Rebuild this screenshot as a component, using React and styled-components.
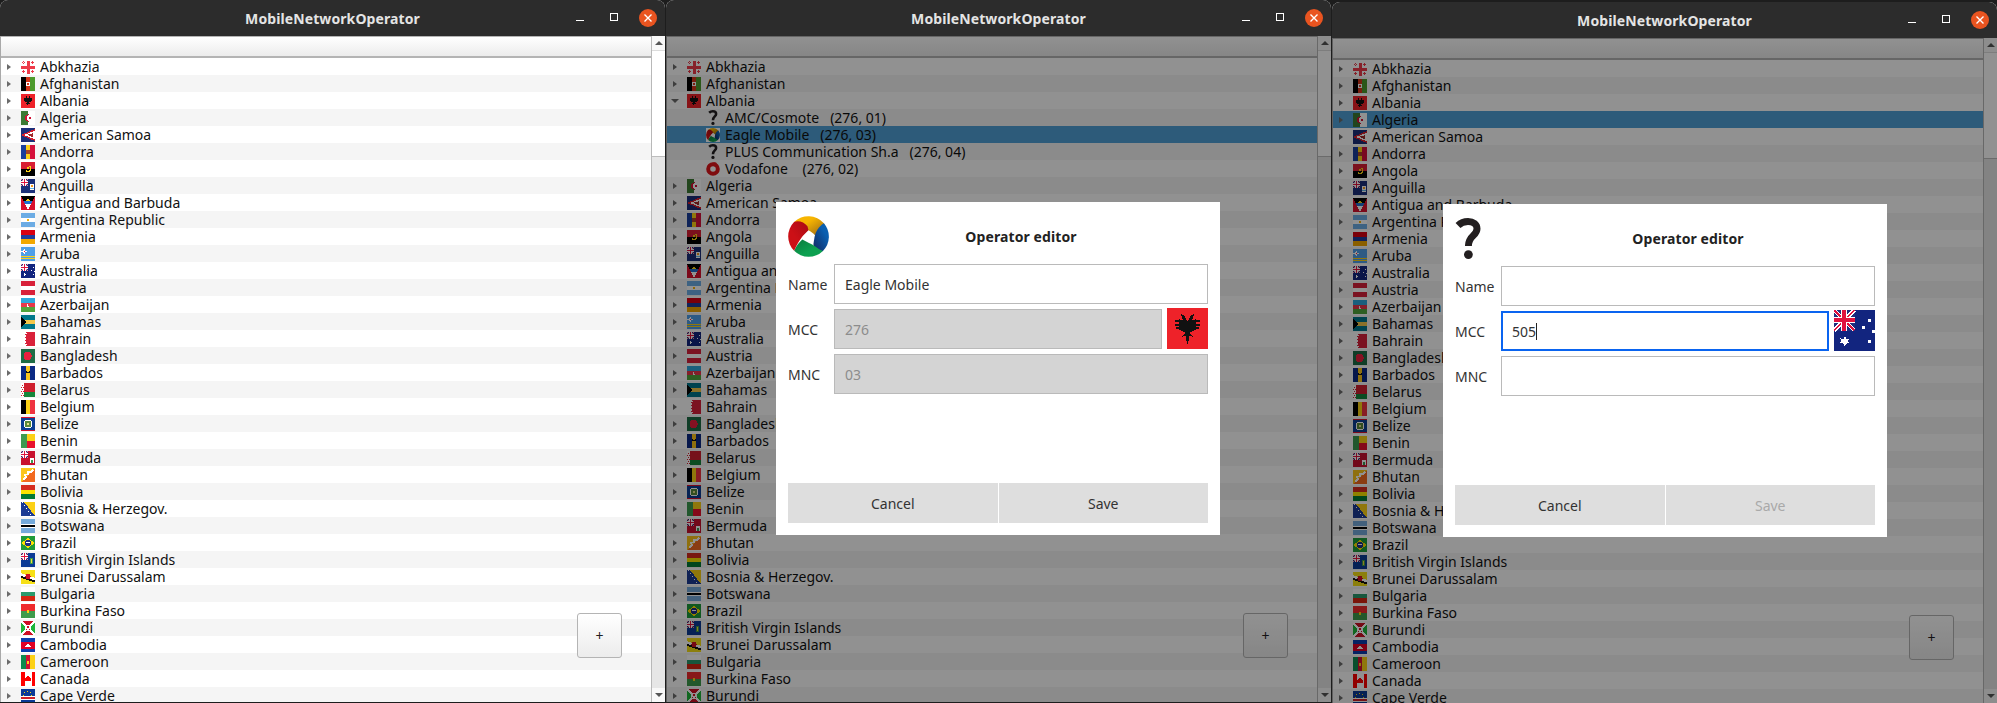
import React from 'react';
import styled, { createGlobalStyle } from 'styled-components';

const UI_FONT = '"Noto Sans", "Open Sans", sans-serif';

const GlobalStyle = createGlobalStyle`
  html, body { margin: 0; padding: 0; background: #1d1d1d; }
  body { width: 1997px; height: 703px; overflow: hidden; font-family: ${UI_FONT}; }
`;

/* ---------- flags ---------- */

const H = (...c) => c.map((col, i) => <rect key={i} x="0" y={(i * 14) / c.length} width="14" height={14 / c.length} fill={col} />);
const V = (...c) => c.map((col, i) => <rect key={i} y="0" x={(i * 14) / c.length} width={14 / c.length} height="14" fill={col} />);
const Dots = ({ fill = '#fff', pts, s = 1 }) => pts.map(([x, y], i) => <rect key={i} x={x} y={y} width={s} height={s} fill={fill} />);

const UK = () => (
  <g>
    <rect width="7" height="7" fill="#1f2f7e" />
    <path d="M0 0L7 7M7 0L0 7" stroke="#fff" strokeWidth="1.4" />
    <path d="M0 0L7 7M7 0L0 7" stroke="#e0123f" strokeWidth=".5" />
    <path d="M3.5 0V7M0 3.5H7" stroke="#fff" strokeWidth="2.2" />
    <path d="M3.5 0V7M0 3.5H7" stroke="#e0123f" strokeWidth="1.2" />
  </g>
);

const Eagle = () => (
  <g fill="#111">
    <path d="M4.9 2.1L6 2.7 6.6 4 7 4.5 7.4 4 8 2.7 9.1 2.1 9 3.2 8.5 3.9 8.7 4 10 3.9 10 7.4 8.6 7.9 7.7 8.6 8.9 9.8 7.7 9.5 7.4 11 7 12.2 6.6 11 6.3 9.5 5.1 9.8 6.3 8.6 5.4 7.9 4 7.4 4 3.9 5.3 4 5.5 3.9 5 3.2Z" />
    <path d="M2.7 4.2H4.4V4.9H2.7zM2.7 5.3H4.4V6H2.7zM3 6.4H4.4V7.1H3zM9.6 4.2H11.3V4.9H9.6zM9.6 5.3H11.3V6H9.6zM9.6 6.4H11V7.1H9.6z" />
  </g>
);

const FLAGS = {
  Abkhazia: (
    <g>
      <rect y="0.5" width="14" height="13" fill="#fff" />
      <path d="M5.5 0.5H8.5V5.5H14V8.5H8.5V13.5H5.5V8.5H0V5.5H5.5Z" fill="#ee3b4a" />
      <Dots fill="#ee3b4a" pts={[[1, 2], [3, 2], [2, 1], [2, 3], [11, 2], [10, 2], [12, 2], [11, 1], [11, 3], [2, 11], [1, 11], [3, 11], [2, 10], [2, 12], [11, 11], [10, 11], [12, 11], [11, 10], [11, 12]]} />
    </g>
  ),
  Afghanistan: (
    <g>
      {V('#000', '#d3361c', '#4d9a2c')}
      <rect x="5" y="5" width="4" height="4" fill="#fff" />
      <rect x="6" y="6" width="2" height="2" fill="#d3361c" />
    </g>
  ),
  Albania: (
    <g>
      <rect width="14" height="14" fill="#ee2229" />
      <Eagle />
    </g>
  ),
  Algeria: (
    <g>
      {V('#3c7a33', '#fff')}
      <circle cx="7.5" cy="7" r="3.6" fill="#d21034" />
      <circle cx="8.6" cy="7" r="3" fill="#fff" />
      <rect x="8" y="6" width="2" height="2" fill="#d21034" />
    </g>
  ),
  'American Samoa': (
    <g>
      <rect width="14" height="14" fill="#1b2f7a" />
      <path d="M14 1L0 7 14 13Z" fill="#d61e2c" />
      <path d="M14 2.6L3 7 14 11.4Z" fill="#fff" />
      <path d="M12.5 5L7 6.6 9 8.4 12 9Z" fill="#a02a2a" />
    </g>
  ),
  Andorra: (
    <g>
      {V('#1a3f9c', '#fcd116', '#d5103b')}
      <rect x="5.4" y="5" width="3.2" height="4" fill="#a8452a" />
    </g>
  ),
  Angola: (
    <g>
      {H('#d81e34', '#000')}
      <path d="M5 8.6C7 10.4 10 9 9.8 6.4 9.6 4.8 8.6 4.2 7.8 4" fill="none" stroke="#fcd116" strokeWidth="1" />
      <rect x="6" y="5" width="2" height="2" fill="#fcd116" />
    </g>
  ),
  Anguilla: (
    <g>
      <rect width="14" height="14" fill="#1b2f7a" />
      <UK />
      <rect x="9" y="5" width="4" height="6" fill="#fff" />
      <rect x="10" y="6" width="2" height="2" fill="#f59a1c" />
      <rect x="9" y="9" width="4" height="1" fill="#63b5e5" />
    </g>
  ),
  'Antigua and Barbuda': (
    <g>
      <rect width="14" height="14" fill="#d8102f" />
      <path d="M0 0H14L7 14Z" fill="#000" />
      <path d="M2.5 5H11.5L10 8H4Z" fill="#1f6fd0" />
      <path d="M4 8H10L7 14Z" fill="#fff" />
      <path d="M4.5 5L7 2 9.5 5Z" fill="#fcd116" />
    </g>
  ),
  'Argentina Republic': (
    <g>
      {H('#6cace4', '#fff', '#6cace4')}
      <rect x="6" y="6" width="2" height="2" fill="#f6b40e" />
    </g>
  ),
  Armenia: H('#d90012', '#1e3f9e', '#f2a800'),
  Aruba: (
    <g>
      <rect width="14" height="14" fill="#4f9fe8" />
      <rect y="9" width="14" height="1" fill="#fcd116" />
      <rect y="11" width="14" height="1" fill="#fcd116" />
      <path d="M3 1.5L4 3.5 6 4.5 4 5.5 3 7.5 2 5.5 0 4.5 2 3.5Z" fill="#fff" />
      <rect x="2.5" y="4" width="1" height="1" fill="#e0123f" />
    </g>
  ),
  Australia: (
    <g>
      <rect width="14" height="14" fill="#12257f" />
      <UK />
      <path d="M3.7 8.9L4.2 9.9 5.3 9.7 4.8 10.6 5.5 11.4 4.4 11.3 3.7 12.3 3 11.3 1.9 11.4 2.6 10.6 2.1 9.7 3.2 9.9Z" fill="#fff" />
      <Dots pts={[[11.6, 3.1], [9.7, 5.6], [13, 6.8], [11.5, 10.4]]} />
    </g>
  ),
  Austria: (
    <g>
      {H('#d8213a', '#fff', '#d8213a')}
    </g>
  ),
  Azerbaijan: (
    <g>
      {H('#2fa8dc', '#e8384a', '#52a53c')}
      <rect x="6" y="5.5" width="2.4" height="3" fill="#fff" />
      <rect x="7" y="5.5" width="1.4" height="2" fill="#e8384a" />
    </g>
  ),
  Bahamas: (
    <g>
      {H('#00778b', '#f3c74a', '#00778b')}
      <path d="M0 2L6 7 0 12Z" fill="#000" />
    </g>
  ),
  Bahrain: (
    <g>
      <rect width="14" height="14" fill="#fff" />
      <path d="M14 0H4L6 1.4 3.6 2.8 6 4.2 3.6 5.6 6 7 3.6 8.4 6 9.8 3.6 11.2 6 12.6 4 14H14Z" fill="#d9213a" />
    </g>
  ),
  Bangladesh: (
    <g>
      <rect width="14" height="14" fill="#1d6b45" />
      <circle cx="6.6" cy="7" r="4" fill="#ea1f3d" />
    </g>
  ),
  Barbados: (
    <g>
      {V('#0b2a84', '#fbc61c', '#0b2a84')}
      <path d="M5.4 5V7.2H6.6V10H7.4V7.2H8.6V5H8V6.4H7.4V5H6.6V6.4H6V5Z" fill="#111" />
    </g>
  ),
  Belarus: (
    <g>
      <rect width="14" height="14" fill="#fff" />
      <rect x="3" width="11" height="9" fill="#cf1f2e" />
      <rect x="3" y="9" width="11" height="5" fill="#16873c" />
      <Dots fill="#cf1f2e" s={1} pts={[[1, 2], [0, 4], [2, 4], [1, 6], [0, 8], [2, 8], [1, 10], [0, 12], [2, 12]]} />
    </g>
  ),
  Belgium: V('#000', '#fcd116', '#ef3340'),
  Belize: (
    <g>
      <rect width="14" height="14" fill="#0b3f94" />
      <rect y="0" width="14" height="1" fill="#d8102f" />
      <rect y="13" width="14" height="1" fill="#d8102f" />
      <circle cx="7" cy="7" r="4.4" fill="#fff" />
      <circle cx="7" cy="7" r="3.4" fill="#5a8a3a" />
      <rect x="5.6" y="5.6" width="2.8" height="2.8" fill="#e7e08a" />
    </g>
  ),
  Benin: (
    <g>
      <rect width="6" height="14" fill="#3d9a50" />
      <rect x="6" width="8" height="7" fill="#fcd116" />
      <rect x="6" y="7" width="8" height="7" fill="#e8112d" />
    </g>
  ),
  Bermuda: (
    <g>
      <rect width="14" height="14" fill="#c8102e" />
      <UK />
      <rect x="9" y="7" width="4" height="5" fill="#fff" />
      <rect x="10" y="9" width="2" height="3" fill="#3d9a50" />
    </g>
  ),
  Bhutan: (
    <g>
      <path d="M0 0H14L0 14Z" fill="#fbc61c" />
      <path d="M14 0V14H0Z" fill="#f26a21" />
      <path d="M2 12L5 9 4 7 7 6 7 4 10 4 12 2" fill="none" stroke="#fff" strokeWidth="1.6" />
    </g>
  ),
  Bolivia: H('#d52b1e', '#f9e300', '#007934'),
  'Bosnia & Herzegov.': (
    <g>
      <rect width="14" height="14" fill="#1b3a94" />
      <path d="M3 0H14V14Z" fill="#fcd116" />
      <Dots pts={[[1, 0], [3, 3], [5, 6], [7, 9], [9, 12]]} />
    </g>
  ),
  Botswana: (
    <g>
      <rect width="14" height="14" fill="#75aadb" />
      <rect y="5" width="14" height="4" fill="#fff" />
      <rect y="6" width="14" height="2" fill="#000" />
    </g>
  ),
  Brazil: (
    <g>
      <rect width="14" height="14" fill="#1f9b3a" />
      <path d="M7 1.6L13.4 7 7 12.4 .6 7Z" fill="#fedf00" />
      <circle cx="7" cy="7" r="3" fill="#1d2f86" />
      <rect x="4.6" y="6.4" width="4.8" height="1" fill="#fff" />
    </g>
  ),
  'British Virgin Islands': (
    <g>
      <rect width="14" height="14" fill="#0b3a96" />
      <UK />
      <rect x="9" y="5" width="3.4" height="6" fill="#3e9a4a" />
      <rect x="10" y="6" width="1.4" height="4" fill="#f5dc3c" />
    </g>
  ),
  'Brunei Darussalam': (
    <g>
      <rect width="14" height="14" fill="#f7e017" />
      <path d="M0 3L14 8V12L0 7Z" fill="#fff" />
      <path d="M0 6L14 10.6V12.6L0 8Z" fill="#111" />
      <rect x="5" y="3.5" width="4" height="5.5" fill="#cf1126" />
      <rect x="3.6" y="6" width="6.8" height="1.4" fill="#cf1126" />
    </g>
  ),
  Bulgaria: H('#fff', '#2a9a6c', '#d62612'),
  'Burkina Faso': (
    <g>
      {H('#ef2b2d', '#3f9b4c')}
      <path d="M7 5.4L7.6 6.6 9 6.8 8 7.8 8.2 9 7 8.4 5.8 9 6 7.8 5 6.8 6.4 6.6Z" fill="#fcd116" />
    </g>
  ),
  Burundi: (
    <g>
      <rect width="14" height="14" fill="#fff" />
      <path d="M1.5 0H12.5L7 5.5Z" fill="#ce1126" />
      <path d="M1.5 14H12.5L7 8.5Z" fill="#ce1126" />
      <path d="M0 1.5V12.5L5.5 7Z" fill="#1eb53a" />
      <path d="M14 1.5V12.5L8.5 7Z" fill="#1eb53a" />
      <circle cx="7" cy="7" r="3.4" fill="#fff" />
      <rect x="6" y="5" width="2" height="2" fill="#ce1126" />
      <rect x="5" y="8" width="1.4" height="1.4" fill="#ce1126" />
      <rect x="7.6" y="8" width="1.4" height="1.4" fill="#ce1126" />
    </g>
  ),
  Cambodia: (
    <g>
      <rect width="14" height="14" fill="#0b3fb0" />
      <rect y="3.5" width="14" height="7" fill="#e00025" />
      <path d="M4 9H10V7.6H9.2V6.6H8.2L7 4.8 5.8 6.6H4.8V7.6H4Z" fill="#fff" />
    </g>
  ),
  Cameroon: (
    <g>
      {V('#0d8a4e', '#d21034', '#fcd116')}
      <path d="M7 5L7.6 6.4 9 6.6 8 7.6 8.2 9 7 8.3 5.8 9 6 7.6 5 6.6 6.4 6.4Z" fill="#fcd116" />
    </g>
  ),
  Canada: (
    <g>
      <rect width="14" height="14" fill="#fff" />
      <rect width="3.5" height="14" fill="#ff0000" />
      <rect x="10.5" width="3.5" height="14" fill="#ff0000" />
      <path d="M7 3.6L7.8 5 9 4.6 8.6 6.6 10 6.2 9.6 7.8 10 8.6 7.4 9.2V10.4H6.6V9.2L4 8.6 4.4 7.8 4 6.2 5.4 6.6 5 4.6 6.2 5Z" fill="#ff0000" />
    </g>
  ),
  'Cape Verde': (
    <g>
      <rect width="14" height="14" fill="#0b3a96" />
      <rect y="7" width="14" height="4" fill="#fff" />
      <rect y="8.3" width="14" height="1.4" fill="#cf2027" />
      <Dots fill="#f7d116" pts={[[3, 3], [6, 1.6], [9, 3], [2, 6], [10, 6]]} />
    </g>
  ),
};

const COUNTRIES = Object.keys(FLAGS);

const FlagSvg = styled.svg`
  display: block;
  flex: none;
  width: ${(p) => p.$size}px;
  height: ${(p) => p.$size}px;
  shape-rendering: crispEdges;
`;

const Flag = ({ name, size = 14 }) => (
  <FlagSvg viewBox="0 0 14 14" $size={size}>
    {FLAGS[name]}
  </FlagSvg>
);

/* ---------- operator icons ---------- */

const QuestionIcon = ({ width, height }) => (
  <svg width={width} height={height} viewBox="0 0 27 41" style={{ display: 'block', flex: 'none' }}>
    <path d="M3 7.5C6 4.6 9.5 3.6 13 3.6 18.4 3.6 22 6.4 22 10.8 22 18 13.4 17.4 13.4 28" fill="none" stroke="#231f20" strokeWidth="7" />
    <circle cx="13.4" cy="36.6" r="4.4" fill="#231f20" />
  </svg>
);

const EagleLogo = ({ size }) => (
  <svg width={size} height={size} viewBox="0 0 40 40" style={{ display: 'block', flex: 'none', background: '#fff' }}>
    <defs>
      <linearGradient id="egY" x1="0" y1="0" x2="1" y2="1">
        <stop offset="0.35" stopColor="#f7b500" />
        <stop offset="1" stopColor="#8a5a1a" />
      </linearGradient>
      <linearGradient id="egB" x1="1" y1="0" x2="0" y2="1">
        <stop offset="0.3" stopColor="#0a5fb0" />
        <stop offset="1" stopColor="#13265e" />
      </linearGradient>
      <linearGradient id="egG" x1="1" y1="1" x2="0" y2="0">
        <stop offset="0.4" stopColor="#0da050" />
        <stop offset="1" stopColor="#0a7a3c" />
      </linearGradient>
      <linearGradient id="egR" x1="0" y1="1" x2="1" y2="0">
        <stop offset="0.4" stopColor="#cc1016" />
        <stop offset="1" stopColor="#a80c14" />
      </linearGradient>
    </defs>
    <path d="M5.9 5.9A20 20 0 0 1 35 7C38 12 37 21 30 21 27 21 26 17 20 14 16 10 11 8 5.9 5.9Z" fill="url(#egY)" />
    <path d="M35 7A20 20 0 0 1 34.1 34.1C29 36 24 32 25 26L26 20C27 15 30 10 35 7Z" fill="url(#egB)" />
    <path d="M34.1 34.1A20 20 0 0 1 6 34C8 29 11 26 14 23L20 26C25 28 29 32 34.1 34.1Z" fill="url(#egG)" />
    <path d="M6 34A20 20 0 0 1 5.9 5.9C10 4 16 6 19 10L20 14 14 20C11 24 8 29 6 34Z" fill="url(#egR)" />
    <path d="M20 14.4L25.6 20 20 25.6 14.4 20Z" fill="#fff" />
  </svg>
);

const VodafoneIcon = ({ size }) => (
  <svg width={size} height={size} viewBox="0 0 14 14" style={{ display: 'block', flex: 'none' }}>
    <circle cx="7" cy="7" r="4.8" fill="none" stroke="#e0161c" strokeWidth="4" />
    <path d="M6 1C8 0 9.6 .2 10.8 1L9.4 4.4C8 4.4 6.6 3.6 6 1Z" fill="#e0161c" />
  </svg>
);

const OPERATOR_ICONS = {
  unknown: <QuestionIcon width={10} height={15} />,
  eagle: <EagleLogo size={14} />,
  vodafone: <VodafoneIcon size={14} />,
};

/* ---------- window chrome ---------- */

const Desktop = styled.div`
  display: flex;
  gap: 1px;
  width: 1997px;
  height: 703px;
  overflow: hidden;
  background: #1d1d1d;
`;

const Win = styled.section`
  display: flex;
  flex-direction: column;
  flex: none;
  width: 665px;
  height: ${(p) => 702 - p.$top + (p.$top ? 1 : 0)}px;
  margin-top: ${(p) => p.$top}px;
  background: #fff;
  border-radius: 8px 8px 0 0;
  overflow: hidden;
`;

const TitleBar = styled.header`
  display: grid;
  grid-template-columns: 1fr auto 1fr;
  align-items: center;
  flex: none;
  height: 36px;
  background: #2c2c2c;
`;

const Title = styled.h1`
  grid-column: 2;
  margin: 0;
  font: 700 14px ${UI_FONT};
  letter-spacing: 0.1px;
  color: #e4e4e4;
`;

const Controls = styled.div`
  grid-column: 3;
  justify-self: end;
  display: flex;
`;

const Ctl = styled.span`
  display: flex;
  align-items: center;
  justify-content: center;
  width: 34px;
  height: 36px;
`;

const MinBar = styled.i`
  display: block;
  width: 8px;
  height: 1px;
  margin-top: 4px;
  background: #fff;
`;

const MaxBox = styled.i`
  display: block;
  box-sizing: border-box;
  width: 8px;
  height: 8px;
  margin-top: -2px;
  border: 1px solid #fff;
`;

const CloseDot = styled.i`
  display: flex;
  align-items: center;
  justify-content: center;
  width: 18px;
  height: 18px;
  border-radius: 50%;
  background: #e95420;
`;

/* ---------- tree ---------- */

const Body = styled.div`
  position: relative;
  display: flex;
  flex: 1;
  min-height: 0;
`;

const TreePane = styled.div`
  flex: 1;
  min-width: 0;
  border-left: 1px solid #a9a9a9;
  overflow: hidden;
`;

const HeaderBar = styled.div`
  box-sizing: border-box;
  height: 22px;
  border-top: 1px solid #b4b4b4;
  border-bottom: 2px solid #b4b4b4;
  background: linear-gradient(#ffffff, #ececec);
`;

const Row = styled.div`
  display: flex;
  align-items: center;
  height: 17px;
  padding-left: ${(p) => (p.$child ? 39 : 0)}px;
  background: ${(p) => (p.$selected ? '#4fa0d6' : p.$alt ? '#f5f5f5' : '#fff')};
  font-size: 14px;
  line-height: 17px;
  color: #111;
  white-space: pre;
`;

const Branch = styled.span`
  display: flex;
  justify-content: center;
  flex: none;
  width: 20px;
  padding-right: 4px;
  box-sizing: border-box;
`;

const IconSlot = styled.span`
  display: flex;
  justify-content: center;
  flex: none;
  width: 14px;
`;

const ArrowRight = styled.i`
  display: block;
  width: 0;
  height: 0;
  border-top: 3.5px solid transparent;
  border-bottom: 3.5px solid transparent;
  border-left: 4px solid #6b6b6b;
`;

const ArrowDown = styled.i`
  display: block;
  width: 0;
  height: 0;
  border-left: 4px solid transparent;
  border-right: 4px solid transparent;
  border-top: 4px solid #6b6b6b;
`;

const RowLabel = styled.span`
  margin-left: 5px;
`;

const ScrollBar = styled.div`
  display: flex;
  flex-direction: column;
  flex: none;
  box-sizing: border-box;
  width: 14px;
  border-left: 1px solid #b8b8b8;
  background: #e6e6e6;
`;

const ScrollBtn = styled.div`
  display: flex;
  align-items: center;
  justify-content: center;
  flex: none;
  height: 14px;
  background: #f8f8f8;
`;

const ScrollThumb = styled.div`
  flex: none;
  height: 107px;
  background: #fff;
  border-top: 1px solid #dcdcdc;
  border-bottom: 1px solid #bdbdbd;
  box-sizing: border-box;
`;

const ScrollTrack = styled.div`
  flex: 1;
`;

const TriUp = styled.i`
  display: block;
  width: 0;
  height: 0;
  border-left: 4px solid transparent;
  border-right: 4px solid transparent;
  border-bottom: 4px solid #555;
`;

const TriDown = styled.i`
  display: block;
  width: 0;
  height: 0;
  border-left: 4px solid transparent;
  border-right: 4px solid transparent;
  border-top: 4px solid #555;
`;

const AddButton = styled.button`
  position: absolute;
  left: 577px;
  top: 577px;
  width: 45px;
  height: 45px;
  padding: 0;
  border: 1px solid #b4b4b4;
  border-radius: 3px;
  background: linear-gradient(#ffffff, #ececec);
  font: 14px ${UI_FONT};
  color: #222;
`;

/* ---------- dialog ---------- */

const Dim = styled.div`
  position: absolute;
  inset: 0;
  padding: 166px 0 0 ${(p) => p.$left}px;
  background: rgba(0, 0, 0, 0.43);
`;

const Dialog = styled.div`
  display: flex;
  flex-direction: column;
  box-sizing: border-box;
  width: 444px;
  height: 333px;
  padding: 14px 12px 12px;
  background: #fff;
  color: #333;
  font-size: 14px;
`;

const DialogHead = styled.div`
  display: grid;
  grid-template-columns: 46px 1fr;
  align-items: center;
  height: 41px;
`;

const DialogTitle = styled.div`
  font-weight: 700;
  font-size: 14px;
  letter-spacing: 0.1px;
  text-align: center;
  color: #222;
`;

const Form = styled.div`
  display: grid;
  grid-template-columns: 46px 1fr;
  grid-auto-rows: 40px;
  row-gap: 5px;
  align-items: center;
  margin-top: 7px;
`;

const FieldLabel = styled.label`
  color: #333;
`;

const FieldRow = styled.div`
  display: flex;
  gap: 5px;
  height: 40px;
`;

const Field = styled.div`
  display: flex;
  align-items: center;
  flex: 1;
  box-sizing: border-box;
  height: 40px;
  padding-left: ${(p) => (p.$focus ? 9 : 10)}px;
  border: ${(p) => (p.$focus ? '2px solid #0a64f0' : '1px solid #bababa')};
  background: ${(p) => (p.$disabled ? '#d4d4d4' : '#fff')};
  color: ${(p) => (p.$disabled ? '#8c8c8c' : '#333')};
`;

const Caret = styled.i`
  display: block;
  width: 1px;
  height: 17px;
  background: #222;
`;

const FlagBox = styled.div`
  flex: none;
  height: 41px;
  margin-top: -1px;
`;

const DialogActions = styled.div`
  display: grid;
  grid-template-columns: 1fr 1fr;
  gap: 1px;
  margin-top: auto;
`;

const ActionButton = styled.button`
  height: 40px;
  padding: 0;
  border: 0;
  background: #dedede;
  font: 14px ${UI_FONT};
  color: ${(p) => (p.$disabled ? '#a9a9a9' : '#333')};
`;

const OperatorDialog = ({ icon, name, mcc, mnc, flag, readOnly, focusMcc, left }) => (
  <Dim $left={left}>
    <Dialog>
      <DialogHead>
        {icon}
        <DialogTitle>Operator editor</DialogTitle>
      </DialogHead>
      <Form>
        <FieldLabel>Name</FieldLabel>
        <Field>{name}</Field>
        <FieldLabel>MCC</FieldLabel>
        <FieldRow>
          <Field $disabled={readOnly} $focus={focusMcc}>
            {mcc}
            {focusMcc && <Caret />}
          </Field>
          <FlagBox>
            <Flag name={flag} size={41} />
          </FlagBox>
        </FieldRow>
        <FieldLabel>MNC</FieldLabel>
        <Field $disabled={readOnly}>{mnc}</Field>
      </Form>
      <DialogActions>
        <ActionButton>Cancel</ActionButton>
        <ActionButton $disabled={!name}>Save</ActionButton>
      </DialogActions>
    </Dialog>
  </Dim>
);

const ALBANIA_OPERATORS = [
  { icon: 'unknown', label: 'AMC/Cosmote   (276, 01)' },
  { icon: 'eagle', label: 'Eagle Mobile   (276, 03)', selected: true },
  { icon: 'unknown', label: 'PLUS Communication Sh.a   (276, 04)' },
  { icon: 'vodafone', label: 'Vodafone    (276, 02)' },
];

const buildRows = (expanded, selected) =>
  COUNTRIES.flatMap((name) => {
    const row = { name, selected: name === selected, open: name === expanded };
    if (name !== expanded) return [row];
    return [row, ...ALBANIA_OPERATORS.map((op) => ({ ...op, child: true }))];
  });

const AppWindow = ({ top = 0, expanded, selected, dialog }) => (
  <Win $top={top}>
    <TitleBar>
      <Title>MobileNetworkOperator</Title>
      <Controls>
        <Ctl><MinBar /></Ctl>
        <Ctl><MaxBox /></Ctl>
        <Ctl>
          <CloseDot>
            <svg width="10" height="10" viewBox="0 0 10 10">
              <path d="M1.5 1.5L8.5 8.5M8.5 1.5L1.5 8.5" stroke="#fff" strokeWidth="1.4" />
            </svg>
          </CloseDot>
        </Ctl>
      </Controls>
    </TitleBar>
    <Body>
      <TreePane>
        <HeaderBar />
        {buildRows(expanded, selected).map((r, i) =>
          r.child ? (
            <Row key={r.label} $child $alt={i % 2 === 1} $selected={r.selected}>
              <IconSlot>{OPERATOR_ICONS[r.icon]}</IconSlot>
              <RowLabel>{r.label}</RowLabel>
            </Row>
          ) : (
            <Row key={r.name} $alt={i % 2 === 1} $selected={r.selected}>
              <Branch>{r.open ? <ArrowDown /> : <ArrowRight />}</Branch>
              <Flag name={r.name} />
              <RowLabel>{r.name}</RowLabel>
            </Row>
          )
        )}
      </TreePane>
      <ScrollBar>
        <ScrollBtn><TriUp /></ScrollBtn>
        <ScrollThumb />
        <ScrollTrack />
        <ScrollBtn><TriDown /></ScrollBtn>
      </ScrollBar>
      <AddButton>+</AddButton>
      {dialog}
    </Body>
  </Win>
);

export default function App() {
  return (
    <>
      <GlobalStyle />
      <Desktop>
        <AppWindow />
        <AppWindow
          expanded="Albania"
          dialog={
            <OperatorDialog
              left={110}
              icon={<EagleLogo size={41} />}
              name="Eagle Mobile"
              mcc="276"
              mnc="03"
              flag="Albania"
              readOnly
            />
          }
        />
        <AppWindow
          top={2}
          selected="Algeria"
          dialog={
            <OperatorDialog
              left={111}
              icon={<QuestionIcon width={27} height={41} />}
              name=""
              mcc="505"
              mnc=""
              flag="Australia"
              focusMcc
            />
          }
        />
      </Desktop>
    </>
  );
}
